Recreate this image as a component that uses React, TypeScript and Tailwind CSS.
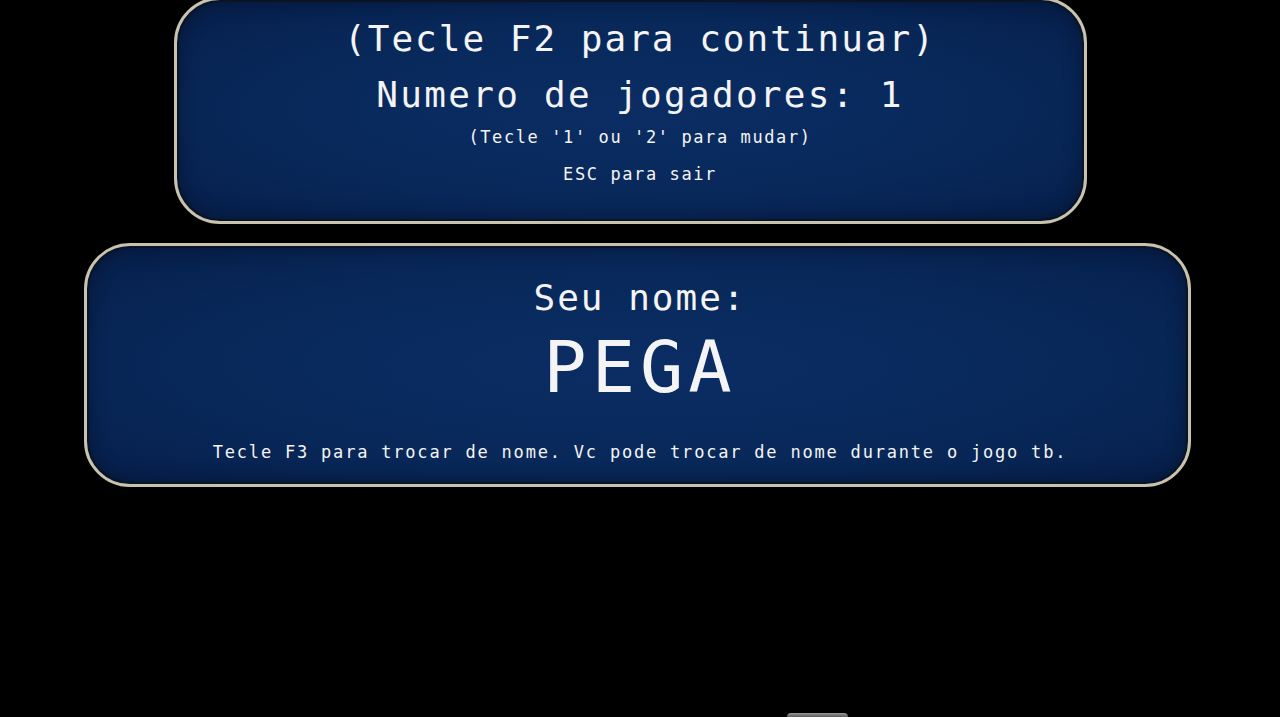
const mono = { fontFamily: '"DejaVu Sans Mono", "Liberation Mono", monospace' };

function Panel({ className, children }: { className: string; children: React.ReactNode }) {
  return (
    <div
      className={`border-[3px] border-[#c9c3ad] bg-[radial-gradient(ellipse_at_center,#0b2d64_0%,#082859_60%,#061e4a_100%)] shadow-[inset_0_0_0_2px_#0a1426,inset_0_0_20px_rgba(0,0,0,0.4)] ${className}`}
    >
      {children}
    </div>
  );
}

export default function App() {
  return (
    <div className="flex h-[717px] w-[1280px] flex-col overflow-hidden bg-black text-[#f4f4f4]" style={mono}>
      {/* Players panel (top edge runs off screen) */}
      <Panel className="-mt-[3px] ml-[174px] h-[227px] w-[913px] rounded-[46px]">
        <div className="flex flex-col items-center pl-[19px] pt-[17px]">
          <div className="text-[36px] leading-[44px] tracking-[2px]">(Tecle F2 para continuar)</div>
          <div className="mt-[12px] text-[36px] leading-[44px] tracking-[2.3px]">Numero de jogadores: 1</div>
          <div className="mt-[8px] text-[17px] leading-[24px] tracking-[1.6px]">(Tecle '1' ou '2' para mudar)</div>
          <div className="mt-[13px] text-[17px] leading-[24px] tracking-[1.6px]">ESC para sair</div>
        </div>
      </Panel>

      {/* Name panel */}
      <Panel className="ml-[84px] mt-[19px] h-[244px] w-[1107px] rounded-[46px]">
        <div className="flex flex-col items-center pl-[5px] pt-[30px]">
          <div className="text-[36px] leading-[44px] tracking-[2px]">Seu nome:</div>
          <div className="mt-[7px] text-[72px] leading-[80px] tracking-[5px]">PEGA</div>
          <div className="mt-[33px] text-[17px] leading-[24px] tracking-[1.8px]">
            Tecle F3 para trocar de nome. Vc pode trocar de nome durante o jogo tb.
          </div>
        </div>
      </Panel>

      <div className="ml-[787px] mt-auto h-[4px] w-[61px] rounded-t-sm bg-gradient-to-b from-[#9a9a9a] to-[#5a5a5a]" />
    </div>
  );
}
